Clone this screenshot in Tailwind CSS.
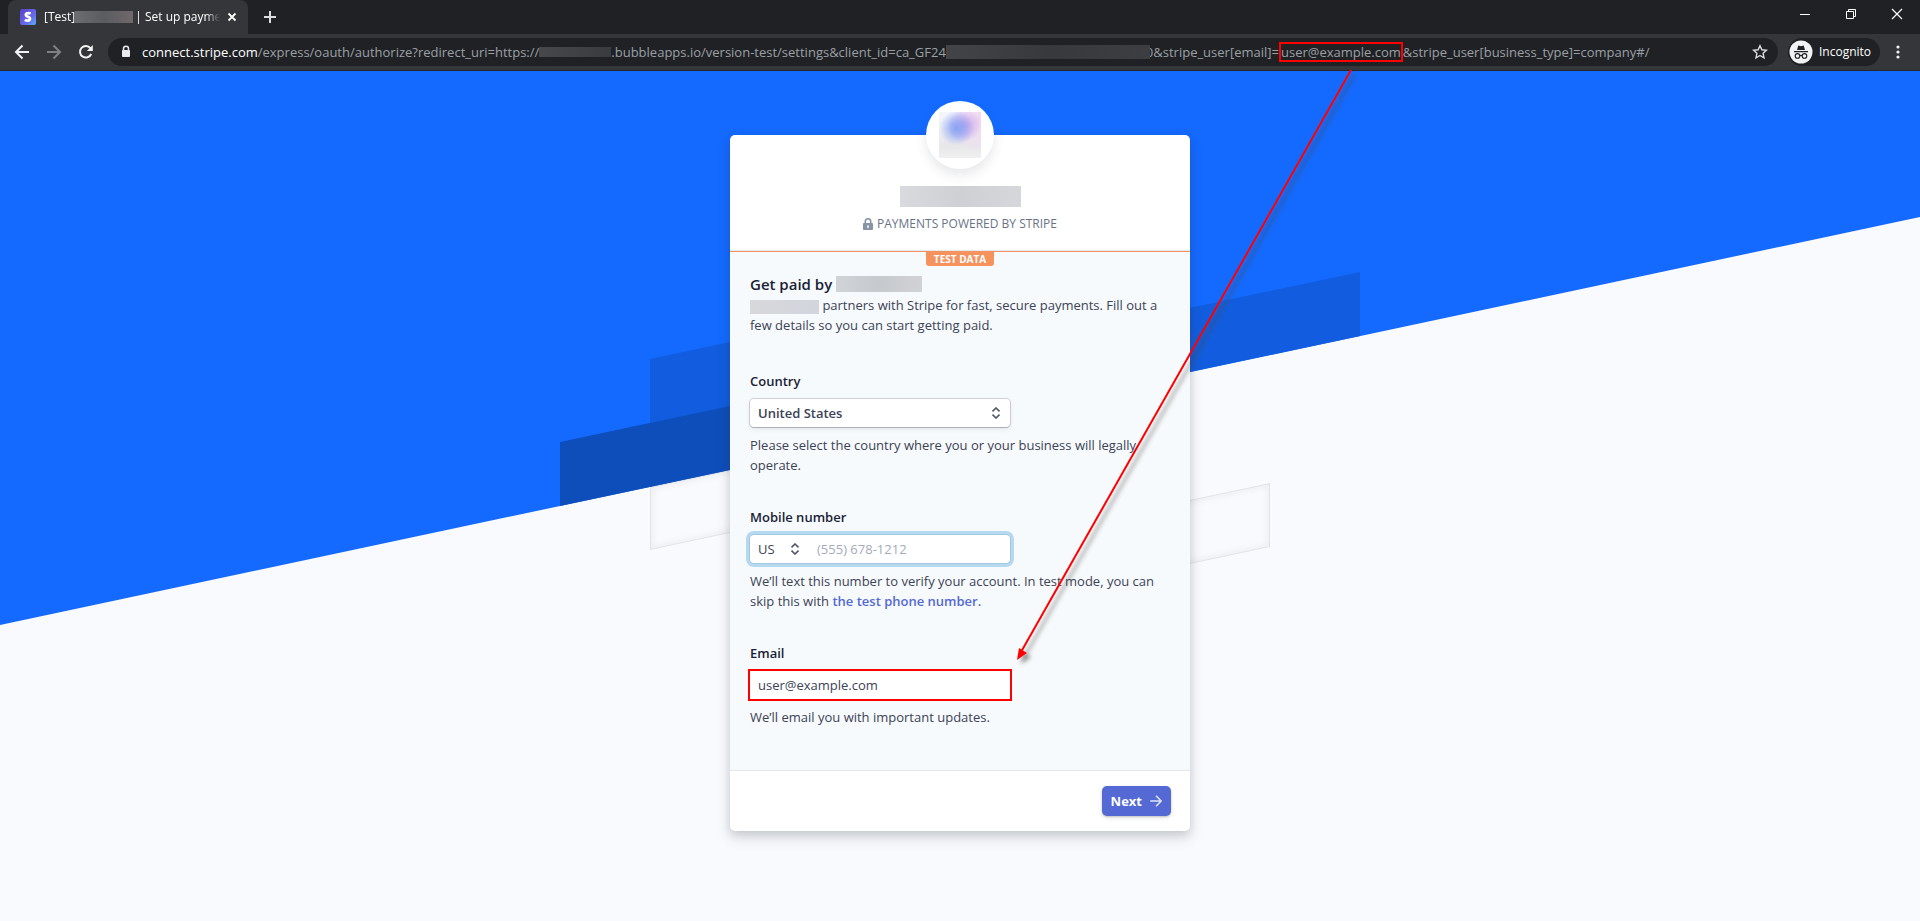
<!DOCTYPE html>
<html lang="en">
<head>
<meta charset="utf-8">
<title>Set up payments</title>
<script src="https://cdn.jsdelivr.net/npm/@tailwindcss/browser@4"></script>
</head>
<body class="relative flex min-h-screen flex-col overflow-x-hidden bg-[#f8fafd] font-['Open_Sans','Noto_Sans',sans-serif] text-[13px] leading-5 text-[#3c4257]">

<!-- Browser chrome -->
<header class="shrink-0 bg-[#202124] text-white">
  <div class="flex h-[34px] items-stretch justify-between">
    <div class="flex">
      <div class="ml-2 flex w-60 items-center rounded-t-lg bg-[#35363a] pr-2 pl-3 text-xs">
        <svg class="mr-2 size-4 shrink-0" viewBox="0 0 16 16">
          <defs><linearGradient id="fav" x1="0" y1="0" x2="1" y2="1"><stop offset="0" stop-color="#5a3fc4"/><stop offset=".65" stop-color="#6a6cf0"/><stop offset="1" stop-color="#55b4f5"/></linearGradient></defs>
          <rect width="16" height="16" rx="2" fill="url(#fav)"/>
          <path d="M10.7 4.6C9.700 4.200 8.700 4 7.900 4.100 6.500 4.200 5.700 4.900 5.800 5.900c.1 2.300 4.200 1.500 4.200 3.700 0 1.300-1.100 2-2.300 2-1 0-2.100-.3-2.900-.8" fill="none" stroke="#fff" stroke-width="2.700"/>
        </svg>
        <div class="flex w-[176px] items-center overflow-hidden whitespace-nowrap [mask-image:linear-gradient(to_right,black_92%,transparent)]">
          <span>[Test]</span>
          <span class="mr-0.5 h-3 w-[58px] shrink-0 bg-linear-to-r from-[#6c6d70] via-[#5b5c60] to-[#6f686c]"></span>
          <span>| Set up payments</span>
        </div>
        <button aria-label="Close tab" class="ml-auto"><svg class="size-4" viewBox="0 0 16 16" stroke="#fff" stroke-width="1.800"><path d="M4.500 4.500l7 7M11.500 4.500l-7 7"/></svg></button>
      </div>
      <button aria-label="New tab" class="ml-3.5"><svg class="size-4" viewBox="0 0 16 16" stroke="#dcdde0" stroke-width="2"><path d="M8 2v12M2 8h12"/></svg></button>
    </div>
    <div class="flex items-start gap-[30px] pt-1.5 pr-[15px]">
      <button aria-label="Minimize"><svg class="size-4" viewBox="0 0 16 16" stroke="#fff"><path d="M3 8.500h10"/></svg></button>
      <button aria-label="Restore"><svg class="size-4" viewBox="0 0 16 16" fill="none" stroke="#fff"><path d="M3.500 5.500h7v7h-7zM5.500 5V3.500h7v7H11"/></svg></button>
      <button aria-label="Close"><svg class="size-4" viewBox="0 0 16 16" stroke="#fff" stroke-width="1.200"><path d="M3 3l10 10M13 3L3 13"/></svg></button>
    </div>
  </div>
  <div class="flex h-9 items-center bg-[#35363a]">
    <button aria-label="Back" class="ml-3.5"><svg class="size-4" viewBox="0 0 16 16" fill="none" stroke="#f1f3f4" stroke-width="2"><path d="M15 8H2M8.500 1.500L2 8l6.500 6.500"/></svg></button>
    <button aria-label="Forward" class="ml-4"><svg class="size-4" viewBox="0 0 16 16" fill="none" stroke="#808185" stroke-width="2"><path d="M1 8h13M7.500 1.500L14 8l-6.500 6.500"/></svg></button>
    <button aria-label="Reload" class="ml-4"><svg class="size-4" viewBox="0 0 16 16"><path d="M13.200 10A5.800 5.800 0 1 1 12.400 4.200" fill="none" stroke="#f1f3f4" stroke-width="2"/><path d="M14.800 1v6h-6z" fill="#f1f3f4"/></svg></button>
    <div class="ml-3.5 flex h-7 min-w-0 flex-1 items-center rounded-full bg-[#202124] pr-2.5 pl-3">
      <svg class="mr-2.5 h-3.5 w-3 shrink-0" viewBox="0 0 12 14"><path d="M3.500 6V3.700a2.500 2.500 0 0 1 5 0V6" fill="none" stroke="#e8eaed" stroke-width="1.500"/><rect x="2" y="5" width="8" height="7" rx="1" fill="#e8eaed"/></svg>
      <div class="flex items-center whitespace-nowrap text-[#9aa0a6]">
        <span class="text-white">connect.stripe.com</span><span>/express/oauth/authorize?redirect_uri=https://</span>
        <span class="h-2.5 w-[72px] bg-linear-to-r from-[#46484b] to-[#3a3b3e]"></span>
        <span>.bubbleapps.io/version-test/settings&amp;client_id=ca_GF24</span>
        <span class="relative z-10 -mr-1 h-3.5 w-[204px] bg-linear-to-r from-[#434447] via-[#38393c] to-[#3d3e41]"></span>
        <span>0&amp;stripe_user[email]=</span>
        <span class="border-2 border-[#f00] leading-4">user@example.com</span>
        <span>&amp;stripe_user[business_type]=company#/</span>
      </div>
      <button aria-label="Bookmark" class="ml-auto"><svg class="size-4" viewBox="0 0 16 16" fill="none" stroke="#dadce0" stroke-width="1.400"><path d="M8 1.700l1.900 4.100 4.500.5-3.300 3 .9 4.500L8 11.500l-4 2.300.9-4.500-3.300-3 4.500-.5z"/></svg></button>
    </div>
    <div class="ml-2.5 flex h-7 w-[92px] items-center gap-1.5 rounded-full bg-[#202124] pl-px text-xs">
      <svg class="size-6 shrink-0" viewBox="0 0 24 24"><circle cx="12" cy="12" r="11.500" fill="#f1f3f4"/><path d="M8 10l1.300-4.500 2.700.8 2.700-.8L16 10zM5 11h14v1.200H5z" fill="#202124"/><g fill="none" stroke="#202124" stroke-width="1.100"><circle cx="8.500" cy="15.900" r="2.300"/><circle cx="15.500" cy="15.900" r="2.300"/><path d="M10.800 15.700q1.200-.7 2.400 0"/></g></svg>
      <span>Incognito</span>
    </div>
    <button aria-label="Menu" class="mr-3.5 ml-2.5"><svg class="size-4" viewBox="0 0 16 16" fill="#f1f3f4"><circle cx="8" cy="3" r="1.600"/><circle cx="8" cy="8" r="1.600"/><circle cx="8" cy="13" r="1.600"/></svg></button>
  </div>
</header>

<main class="relative flex flex-1 items-start justify-center border-t border-[#26272b] pt-16">
  <!-- Slanted stripes backdrop -->
  <svg class="absolute inset-0 size-full" viewBox="0 1 1920 850" preserveAspectRatio="xMidYMin slice" aria-hidden="true">
    <defs><filter id="soft"><feGaussianBlur stdDeviation="3"/></filter>
      <clipPath id="boxes"><path d="M650 417L800 385V448L650 480zM1100 449L1270 413V477L1100 513z"/></clipPath></defs>
    <path d="M0 0H1920V147L0 555z" fill="#146aff"/>
    <path d="M650 289L800 257V321L650 353zM1100 257L1360 202V266L1100 321z" fill="#125ddf"/>
    <path d="M560 372L800 321V385L560 436z" fill="#0e4eba"/>
    <g fill="none" stroke="#000" clip-path="url(#boxes)">
      <path d="M650 417L800 385V448L650 480zM1100 449L1270 413V477L1100 513z" stroke-opacity=".06" stroke-width="2"/>
      <path d="M650 417L800 385V448L650 480zM1100 449L1270 413V477L1100 513z" stroke-opacity=".06" stroke-width="5" filter="url(#soft)"/>
    </g>
  </svg>

  <form class="relative flex w-full max-w-[460px] flex-col rounded-[5px] bg-white shadow-[0_7px_14px_rgba(60,66,87,0.16),0_3px_10px_rgba(0,0,0,0.12)]">
    <div class="flex h-[116px] flex-col items-center border-b border-[#e3e8ee]">
      <div class="-mt-[34px] flex size-[68px] shrink-0 items-center justify-center rounded-full bg-white shadow-[0_6px_12px_rgba(60,66,87,0.12)]">
        <div class="h-[46px] w-[42px] bg-[radial-gradient(circle_at_42%_35%,#8aa3f4_0%,rgba(138,163,244,0.75)_15%,rgba(138,163,244,0)_45%),radial-gradient(circle_at_60%_30%,rgba(190,150,235,0.8)_0%,rgba(190,150,235,0)_40%),radial-gradient(circle_at_90%_20%,#efd2ef_0%,rgba(239,210,239,0)_55%),linear-gradient(to_bottom,#f4f7fd,#e7e7e9_75%,#f0f0f0)]"></div>
      </div>
      <div class="mt-[17px] h-[21px] w-[121px] shrink-0 bg-linear-to-r from-[#d9dadd] via-[#cfd0d4] to-[#d6d7da]"></div>
      <div class="mt-[7px] flex items-center gap-1 text-xs leading-5 font-medium text-[#697386]">
        <svg class="h-3 w-2.5" viewBox="0 0 10 12"><path d="M2.300 6V3.500a2.700 2.700 0 0 1 5.400 0V6" fill="none" stroke="#8792a2" stroke-width="1.600"/><path d="M1 5h8a1 1 0 0 1 1 1v5a1 1 0 0 1-1 1H1a1 1 0 0 1-1-1V6a1 1 0 0 1 1-1zM5 7.200a1 1 0 0 0-.6 1.800v1.300h1.200V9A1 1 0 0 0 5 7.200z" fill="#8792a2" fill-rule="evenodd"/></svg>
        <span>PAYMENTS POWERED BY STRIPE</span>
      </div>
    </div>

    <div class="flex flex-col border-t border-[#f5925e] bg-[#f7fafc] px-5 pb-[43px]">
      <div class="h-3.5 self-center rounded-b-[3px] bg-[#f5925e] px-2 text-[10px] leading-[15px] font-bold text-white">TEST DATA</div>
      <h1 class="mt-[7px] flex items-center gap-1 text-[15px] leading-[22px] font-semibold text-[#1a1f36]">Get paid by <span class="h-4 w-[86px] bg-linear-to-r from-[#d0d3d7] via-[#c6c9cd] to-[#d0d2d6]"></span></h1>
      <p><span class="inline-block h-3.5 w-[69px] bg-linear-to-r from-[#d6d8dc] to-[#d2d5dc] align-middle"></span> partners with Stripe for fast, secure payments. Fill out a few details so you can start getting paid.</p>

      <div class="mt-9 flex flex-col">
        <label for="country" class="font-semibold text-[#1a1f36]">Country</label>
        <div class="relative mt-2 h-7 w-[260px]">
          <select id="country" class="h-7 w-full appearance-none rounded-sm bg-white px-2 font-semibold text-[#3c4257] shadow-[0_0_0_1px_rgba(60,66,87,0.2),0_1px_1px_rgba(0,0,0,0.15),0_2px_5px_rgba(60,66,87,0.1)]"><option>United States</option></select>
          <svg class="pointer-events-none absolute top-2 right-[9px] h-3 w-2.5" viewBox="0 0 10 12" fill="none" stroke="#4f566b" stroke-width="1.600"><path d="M1.500 4.300L5 1l3.500 3.300M1.500 7.700L5 11l3.500-3.300"/></svg>
        </div>
        <p class="mt-2">Please select the country where you or your business will legally operate.</p>
      </div>

      <div class="mt-8 flex flex-col">
        <label for="phone" class="font-semibold text-[#1a1f36]">Mobile number</label>
        <div class="relative mt-2 flex h-7 w-[260px] rounded-sm bg-white shadow-[0_0_0_1px_#a3c8e0,0_0_0_4px_#b5d9ee]">
          <select aria-label="Phone country" class="h-7 w-[60px] appearance-none px-2 font-medium text-[#3c4257]"><option>US</option></select>
          <svg class="pointer-events-none absolute top-2 left-10 h-3 w-2.5" viewBox="0 0 10 12" fill="none" stroke="#4f566b" stroke-width="1.600"><path d="M1.500 4.300L5 1l3.500 3.300M1.500 7.700L5 11l3.500-3.300"/></svg>
          <input id="phone" type="tel" placeholder="(555) 678-1212" class="min-w-0 flex-1 bg-transparent px-[7px] outline-none placeholder:text-[#a3acb9]">
        </div>
        <p class="mt-2">We’ll text this number to verify your account. In test mode, you can skip this with <a href="#" class="font-semibold text-[#5469d4]">the test phone number.</a></p>
      </div>

      <div class="mt-8 flex flex-col">
        <label for="email" class="font-semibold text-[#1a1f36]">Email</label>
        <input id="email" type="email" value="user@example.com" class="-mx-0.5 mt-1.5 -mb-0.5 h-8 w-[264px] border-2 border-[#f00] bg-white px-2 text-[#3c4257] outline-none">
        <p class="mt-2">We’ll email you with important updates.</p>
      </div>
    </div>

    <div class="flex justify-end border-t border-[#e3e8ee] px-[19px] py-[15px]">
      <button type="button" class="flex h-[30px] items-center gap-2 rounded-[5px] bg-[#5469d4] px-[9px] font-bold text-white shadow-[0_1px_2px_rgba(0,0,0,0.2),0_2px_5px_rgba(60,66,87,0.1)]">Next
        <svg class="size-3" viewBox="0 0 12 12" fill="none" stroke="#dfe4fa" stroke-width="1.600" stroke-linecap="round"><path d="M.8 6h10.400M6.500 1.200L11.200 6l-4.700 4.800"/></svg>
      </button>
    </div>
  </form>
</main>

<!-- Annotation arrow -->
<svg class="pointer-events-none absolute inset-0 size-full" viewBox="0 0 1920 921" preserveAspectRatio="xMidYMin meet" aria-hidden="true">
  <defs><filter id="drop" x="-10%" y="-10%" width="120%" height="120%"><feDropShadow dx="4" dy="4" stdDeviation="2" flood-color="#444" flood-opacity=".6"/></filter></defs>
  <g filter="url(#drop)"><path d="M1351 70L1021 652" stroke="#f00" stroke-width="2"/><path d="M1017 660L1019 648L1027 653z" fill="#f00"/></g>
</svg>
</body>
</html>
